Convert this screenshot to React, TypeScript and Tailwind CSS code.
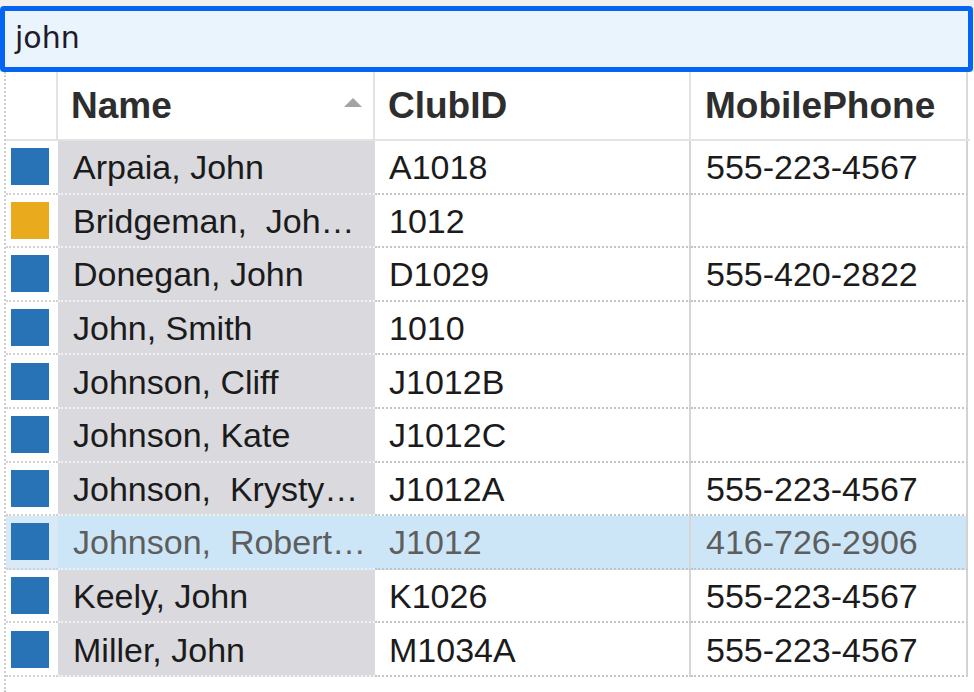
import React from 'react';

type Row = { name: string; club: string; phone: string; color: 'blue' | 'amber'; selected?: boolean };

const rows: Row[] = [
  { name: 'Arpaia, John', club: 'A1018', phone: '555-223-4567', color: 'blue' },
  { name: 'Bridgeman,  Joh…', club: '1012', phone: '', color: 'amber' },
  { name: 'Donegan, John', club: 'D1029', phone: '555-420-2822', color: 'blue' },
  { name: 'John, Smith', club: '1010', phone: '', color: 'blue' },
  { name: 'Johnson, Cliff', club: 'J1012B', phone: '', color: 'blue' },
  { name: 'Johnson, Kate', club: 'J1012C', phone: '', color: 'blue' },
  { name: 'Johnson,  Krysty…', club: 'J1012A', phone: '555-223-4567', color: 'blue' },
  { name: 'Johnson,  Robert…', club: 'J1012', phone: '416-726-2906', color: 'blue', selected: true },
  { name: 'Keely, John', club: 'K1026', phone: '555-223-4567', color: 'blue' },
  { name: 'Miller, John', club: 'M1034A', phone: '555-223-4567', color: 'blue' },
];

export default function App() {
  return (
    <div className="w-[974px] h-[692px] overflow-hidden bg-white flex flex-col font-['Liberation_Sans',Arial,sans-serif]">
      <div className="bg-[#f0f0f0] pt-[6px] pr-[1px]">
        <div className="h-[66px] rounded-[4px] border-[5px] border-[#0564f4] bg-[#eaf4fc] flex items-center pl-[10px]">
          <span className="text-[30px] text-[#1f1a2c] font-['DejaVu_Sans',Verdana,sans-serif] leading-none pb-[3px]">john</span>
        </div>
      </div>

      <div className="ml-[4px] w-[966px] flex-1 flex flex-col border-l-2 border-dotted border-[#cfcfcf]">
        {/* header */}
        <div className="flex h-[69px] border-b-2 border-[#e3e3e3] text-[37px] font-bold text-[#2e2e2e]">
          <div className="w-[52px] border-r-2 border-[#e3e3e3]" />
          <div className="w-[317px] border-r-2 border-[#e3e3e3] flex items-center justify-between pl-[13px] pr-[11px]">
            <span>Name</span>
            <svg width="18" height="10" viewBox="0 0 18 10" className="mb-[8px]">
              <polygon points="0,10 9,1 18,10" fill="#a3a3a3" />
            </svg>
          </div>
          <div className="w-[316px] border-r-2 border-[#e3e3e3] flex items-center pl-[13px]">ClubID</div>
          <div className="w-[277px] border-r-2 border-[#dadada] flex items-center pl-[14px]">MobilePhone</div>
        </div>

        {rows.map((r) => {
          const txt = r.selected ? 'text-[#5e5e5e]' : 'text-[#1b1b1b]';
          return (
            <div key={r.club} className={`flex h-[53.6px] text-[34px] ${txt}`}>
              <div
                className={`w-[52px] flex items-center pl-[5px] border-b-2 border-dotted border-[#d2d2d2] ${
                  r.selected ? 'bg-[#d8eaf8]' : 'bg-white'
                }`}
              >
                <div className={`w-[38px] h-[37px] ${r.color === 'blue' ? 'bg-[#2872b6]' : 'bg-[#e9ab1d]'}`} />
              </div>
              <div
                className={`w-[317px] flex items-center pl-[15px] pr-[8px] pt-[2px] border-b-2 border-dotted whitespace-pre overflow-hidden ${
                  r.selected ? 'bg-[#cde6f7] border-[#e6f1fa]' : 'bg-[#d9d9de] border-[#f3f3f5]'
                }`}
              >
                {r.name}
              </div>
              <div
                className={`w-[316px] flex items-center pl-[14px] pt-[2px] border-b-2 border-dotted border-[#c4c4c4] border-r-2 [border-right-style:solid] border-r-[#d6d6d6] ${
                  r.selected ? 'bg-[#cde6f7]' : 'bg-white'
                }`}
              >
                {r.club}
              </div>
              <div
                className={`w-[277px] flex items-center pl-[15px] pt-[2px] border-b-2 border-dotted border-[#c4c4c4] border-r-2 [border-right-style:solid] border-r-[#d3d3d3] ${
                  r.selected ? 'bg-[#cde6f7]' : 'bg-white'
                }`}
              >
                {r.phone}
              </div>
            </div>
          );
        })}
        <div className="flex-1" />
      </div>
    </div>
  );
}
